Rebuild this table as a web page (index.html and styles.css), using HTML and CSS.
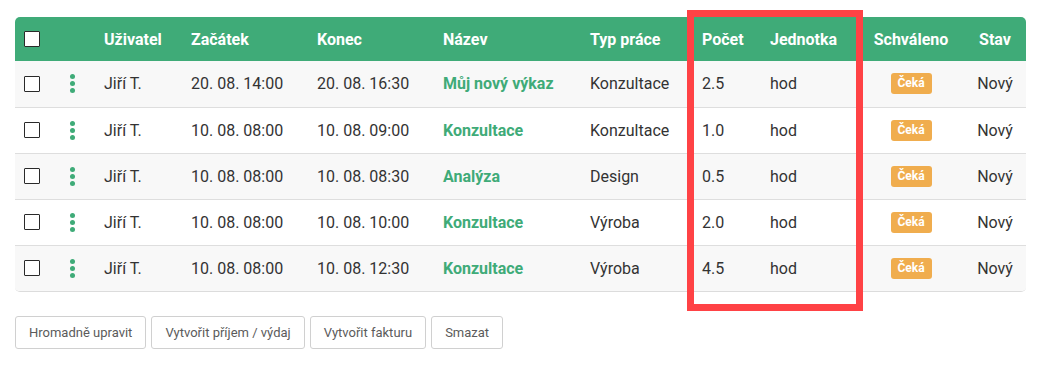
FILE: index.html
```html
<!DOCTYPE html>
<html lang="cs">
<head>
<meta charset="utf-8">
<title>Výkazy</title>
<link rel="stylesheet" href="styles.css">
</head>
<body>
<div class="page">
  <div class="table-wrap">
    <table class="grid">
      <colgroup>
        <col class="w-check"><col class="w-menu"><col class="w-user"><col class="w-date"><col class="w-date">
        <col class="w-name"><col class="w-type"><col class="w-count"><col class="w-unit"><col class="w-appr"><col class="w-state">
      </colgroup>
      <thead>
        <tr>
          <th class="c-check"><span class="cb cb-head"></span></th>
          <th></th>
          <th>Uživatel</th>
          <th>Začátek</th>
          <th>Konec</th>
          <th>Název</th>
          <th>Typ práce</th>
          <th>Počet</th>
          <th>Jednotka</th>
          <th class="center">Schváleno</th>
          <th class="center">Stav</th>
        </tr>
      </thead>
      <tbody>
        <tr>
          <td class="c-check"><span class="cb"></span></td>
          <td><span class="dots"><i></i><i></i><i></i></span></td>
          <td>Jiří T.</td><td>20. 08. 14:00</td><td>20. 08. 16:30</td>
          <td><a class="link">Můj nový výkaz</a></td><td>Konzultace</td><td>2.5</td><td>hod</td>
          <td class="center"><span class="badge">Čeká</span></td><td class="center">Nový</td>
        </tr>
        <tr>
          <td class="c-check"><span class="cb"></span></td>
          <td><span class="dots"><i></i><i></i><i></i></span></td>
          <td>Jiří T.</td><td>10. 08. 08:00</td><td>10. 08. 09:00</td>
          <td><a class="link">Konzultace</a></td><td>Konzultace</td><td>1.0</td><td>hod</td>
          <td class="center"><span class="badge">Čeká</span></td><td class="center">Nový</td>
        </tr>
        <tr>
          <td class="c-check"><span class="cb"></span></td>
          <td><span class="dots"><i></i><i></i><i></i></span></td>
          <td>Jiří T.</td><td>10. 08. 08:00</td><td>10. 08. 08:30</td>
          <td><a class="link">Analýza</a></td><td>Design</td><td>0.5</td><td>hod</td>
          <td class="center"><span class="badge">Čeká</span></td><td class="center">Nový</td>
        </tr>
        <tr>
          <td class="c-check"><span class="cb"></span></td>
          <td><span class="dots"><i></i><i></i><i></i></span></td>
          <td>Jiří T.</td><td>10. 08. 08:00</td><td>10. 08. 10:00</td>
          <td><a class="link">Konzultace</a></td><td>Výroba</td><td>2.0</td><td>hod</td>
          <td class="center"><span class="badge">Čeká</span></td><td class="center">Nový</td>
        </tr>
        <tr>
          <td class="c-check"><span class="cb"></span></td>
          <td><span class="dots"><i></i><i></i><i></i></span></td>
          <td>Jiří T.</td><td>10. 08. 08:00</td><td>10. 08. 12:30</td>
          <td><a class="link">Konzultace</a></td><td>Výroba</td><td>4.5</td><td>hod</td>
          <td class="center"><span class="badge">Čeká</span></td><td class="center">Nový</td>
        </tr>
      </tbody>
    </table>
  </div>
  <div class="actions">
    <button class="btn">Hromadně upravit</button>
    <button class="btn">Vytvořit příjem / výdaj</button>
    <button class="btn">Vytvořit fakturu</button>
    <button class="btn">Smazat</button>
  </div>
  <div class="highlight"></div>
</div>
</body>
</html>
```

FILE: styles.css
```css
* { box-sizing: border-box; }
html, body { margin: 0; padding: 0; background: #fff; }
body {
  font-family: Roboto, "Liberation Sans", sans-serif;
  font-size: 16px;
  color: #333;
}
.page {
  position: relative;
  padding: 17px 18px 0 15px;
}
.table-wrap {
  border-radius: 5px;
  overflow: hidden;
  border-bottom: 1px solid #dcdcdc;
}
.grid {
  width: 1011px;
  table-layout: fixed;
  border-collapse: collapse;
}
.w-check { width: 47px; }
.w-menu { width: 34px; }
.w-user { width: 87px; }
.w-date { width: 126px; }
.w-name { width: 147px; }
.w-type { width: 112px; }
.w-count { width: 68px; }
.w-unit { width: 96px; }
.w-appr { width: 106px; }
.w-state { width: 62px; }

.grid th {
  background: #3fab78;
  color: #fff;
  font-weight: 700;
  text-align: left;
  height: 44px;
  padding: 0 8px;
  white-space: nowrap;
}
.grid td {
  height: 46px;
  padding: 0 8px;
  white-space: nowrap;
  border-top: 1px solid #dedede;
}
.grid tbody tr:first-child td { border-top: none; height: 46px; }
.grid tbody tr:nth-child(odd) { background: #f8f8f8; }
.grid tbody tr:nth-child(even) { background: #fff; }
.grid .center { text-align: center; padding: 0; }
.grid .c-check { padding-left: 9px; }

.cb {
  display: block;
  width: 16px;
  height: 16px;
  border: 1px solid #2a2a2a;
  border-radius: 1px;
  background: #fff;
}
.cb-head { margin-top: 0; }

.dots {
  display: flex;
  flex-direction: column;
  gap: 2px;
  width: 5px;
}
.dots i {
  display: block;
  width: 5px;
  height: 5px;
  border-radius: 50%;
  background: #3fab78;
}

.link {
  color: #3fab78;
  font-weight: 700;
  text-decoration: none;
}

.badge {
  display: inline-block;
  width: 41px;
  height: 21px;
  line-height: 21px;
  border-radius: 3px;
  background: #f0ad4e;
  color: #fff;
  font-size: 12px;
  font-weight: 700;
  text-align: center;
  vertical-align: middle;
}

.actions {
  display: flex;
  gap: 5px;
  margin-top: 24px;
}
.btn {
  height: 33px;
  padding: 0 13px;
  background: #fff;
  border: 1px solid #d0d0d0;
  border-radius: 3px;
  font-family: Roboto, "Liberation Sans", sans-serif;
  font-size: 13px;
  color: #5b5b5b;
}

.highlight {
  position: absolute;
  left: 687px;
  top: 10px;
  width: 176px;
  height: 301px;
  border: 7px solid #ff4245;
  pointer-events: none;
}
```
